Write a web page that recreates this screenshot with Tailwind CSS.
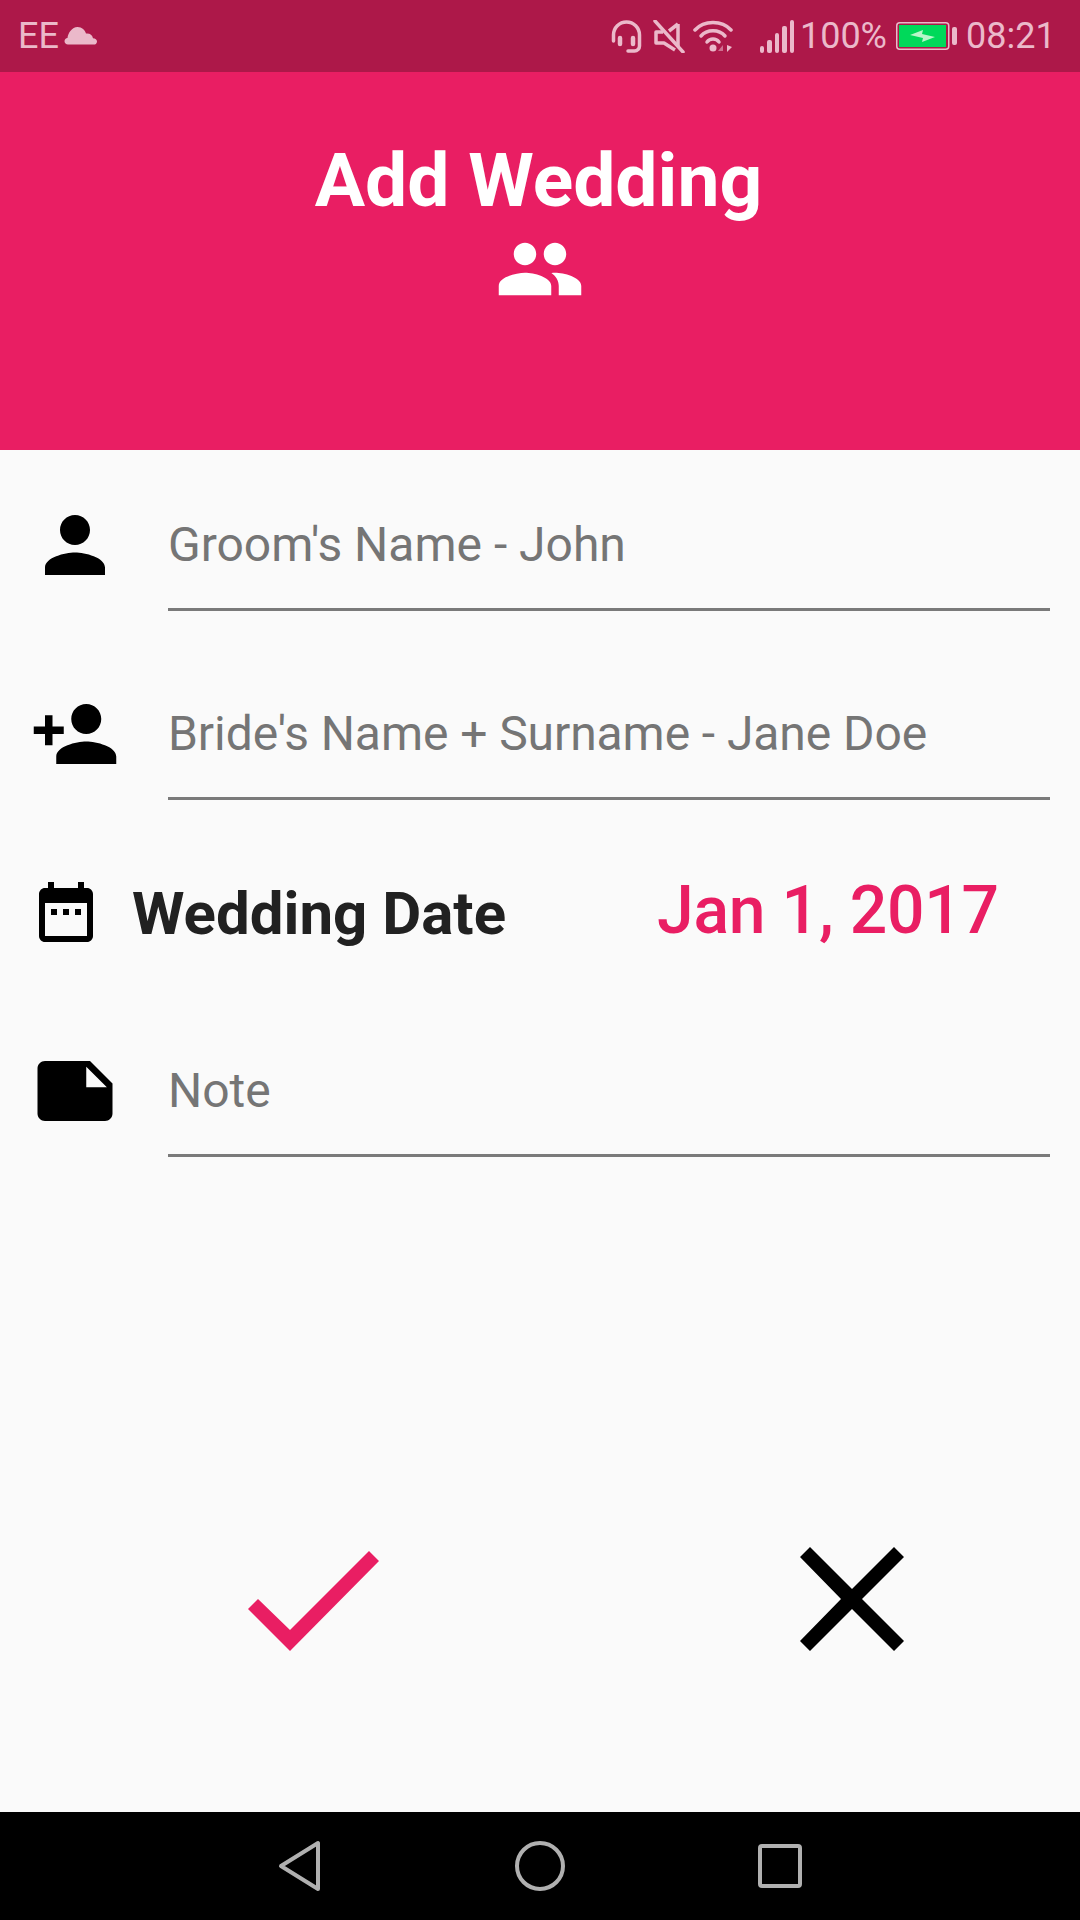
<!DOCTYPE html>
<html lang="en">
<head>
    <meta charset="UTF-8">
    <meta name="viewport" content="width=device-width, initial-scale=1.0">
    <title>Add Wedding</title>
    <script src="https://cdn.jsdelivr.net/npm/@tailwindcss/browser@4"></script>
</head>
<body class="bg-[#fafafa]">
    <div class="w-[1080px] h-[1920px] flex flex-col overflow-hidden font-['Roboto',sans-serif]">

        <!-- Status bar -->
        <div class="h-[72px] bg-[#ad1849] flex items-center text-[36px] leading-none text-[#ebb9ca] shrink-0">
            <span class="ml-[18px]">EE</span>
            <svg class="ml-[5px] -mt-[1px]" width="34" height="20" viewBox="0 0 34 20" fill="#ebb9ca"><path d="M4 18.500c-2 0-3.500-1.500-3.500-3.300s1.300-3 3-3.200C4 7 8 1 13.500 1c4.500 0 7.500 3 8.500 6.500 3.500-.5 6.500 1.500 7 4.700 2.300 0 4 1.300 4 3.200s-1.500 3.100-3 3.100H4z"/></svg>

            <svg class="ml-[513px]" width="31" height="33" viewBox="0 0 31 33" fill="none" stroke="#ebb9ca" stroke-width="3.500" stroke-linecap="round">
                <path d="M2.500 21V15a13 13 0 0 1 26 0V26a5 5 0 0 1-5 5H17"/>
                <path d="M9 18v6M22 18v6" stroke-width="4.500"/>
            </svg>
            <svg class="ml-[10px]" width="33" height="33" viewBox="0 0 33 33" fill="none" stroke="#ebb9ca" stroke-width="3.500" stroke-linejoin="round">
                <path d="M26 4V26M26 4L17 11M11 12H4V23H12L23 30"/>
                <path d="M3 1L31 32" stroke-linecap="round"/>
            </svg>
            <svg class="ml-[8px]" width="40" height="33" viewBox="0 0 40 33" fill="none" stroke="#ebb9ca" stroke-width="3.500" stroke-linecap="round">
                <path d="M2 10C11 0 29 0 38 10"/>
                <path d="M8 16C14 9 26 9 32 16"/>
                <path d="M14 22C17 18 23 18 26 22"/>
                <circle cx="20" cy="28" r="3.500" fill="#ebb9ca" stroke="none"/>
                <path d="M30 31V25L25 31z" fill="#cf6f90" stroke="none"/>
                <path d="M34 25V32L39 27z" fill="#ebb9ca" stroke="none"/>
            </svg>
            <svg class="ml-[27px]" width="34" height="33" viewBox="0 0 34 33" fill="#ebb9ca">
                <rect x="0" y="26" width="4" height="7" rx="2"/>
                <rect x="7" y="20" width="5" height="13" rx="2"/>
                <rect x="15" y="13" width="4" height="20" rx="2"/>
                <rect x="22" y="6" width="5" height="27" rx="2"/>
                <rect x="30" y="0" width="4" height="33" rx="2"/>
            </svg>
            <span class="ml-[6px]">100%</span>
            <svg class="ml-[9px]" width="61" height="28" viewBox="0 0 61 28">
                <rect x="0.750" y="0.750" width="52" height="26.500" rx="3" fill="none" stroke="#ebb9ca" stroke-width="1.500"/>
                <rect x="3" y="3" width="47" height="22" fill="#00d95a"/>
                <path d="M14 13L27 8L26 12L39 15L26 20L27 16z" fill="#b9f6ca"/>
                <rect x="56" y="5" width="5" height="18" rx="2" fill="#ebb9ca"/>
            </svg>
            <span class="ml-[9px]">08:21</span>
        </div>

        <!-- Header -->
        <div class="h-[378px] bg-[#e91e63] flex flex-col items-center shrink-0">
            <h1 class="mt-[71px] -ml-[3px] text-[75px] leading-[75px] font-bold text-white">Add Wedding</h1>
            <svg class="mt-[6px]" width="90" height="90" viewBox="0 0 24 24" fill="#ffffff"><path d="M16 11c1.660 0 2.990-1.340 2.990-3S17.660 5 16 5c-1.660 0-3 1.340-3 3s1.340 3 3 3zm-8 0c1.660 0 2.990-1.340 2.990-3S9.660 5 8 5C6.340 5 5 6.340 5 8s1.340 3 3 3zm0 2c-2.330 0-7 1.170-7 3.500V19h14v-2.500c0-2.330-4.670-3.500-7-3.500zm8 0c-.290 0-.620.020-.970.050 1.160.840 1.970 1.970 1.970 3.450V19h6v-2.500c0-2.330-4.670-3.500-7-3.500z"/></svg>
        </div>

        <!-- Form -->
        <div class="flex-1 flex flex-col">
            <!-- Groom -->
            <div class="mt-[50px] h-[111px] flex px-[30px]">
                <svg class="shrink-0" width="90" height="90" viewBox="0 0 24 24" fill="#000000"><path d="M12 12c2.210 0 4-1.790 4-4s-1.790-4-4-4-4 1.790-4 4 1.790 4 4 4zm0 2c-2.670 0-8 1.340-8 4v2h16v-2c0-2.660-5.330-4-8-4z"/></svg>
                <div class="ml-[48px] flex-1 border-b-[3px] border-[#7a7a7a] text-[48px] leading-[90px] text-[#757575]">Groom's Name - John</div>
            </div>
            <!-- Bride -->
            <div class="mt-[78px] h-[111px] flex px-[30px]">
                <svg class="shrink-0" width="90" height="90" viewBox="0 0 24 24" fill="#000000"><path d="M15 12c2.210 0 4-1.790 4-4s-1.790-4-4-4-4 1.790-4 4 1.790 4 4 4zm-9-2V7H4v3H1v2h3v3h2v-3h3v-2H6zm9 4c-2.670 0-8 1.340-8 4v2h16v-2c0-2.660-5.330-4-8-4z"/></svg>
                <div class="ml-[48px] flex-1 border-b-[3px] border-[#7a7a7a] text-[48px] leading-[90px] tracking-[-0.07px] text-[#757575]">Bride's Name + Surname - Jane Doe</div>
            </div>
            <!-- Wedding date -->
            <div class="mt-[76px] h-[72px] flex items-center px-[30px]">
                <svg class="shrink-0" width="72" height="72" viewBox="0 0 24 24" fill="#000000"><path d="M19 4h-1V2h-2v2H8V2H6v2H5c-1.100 0-2 .9-2 2v14c0 1.100.9 2 2 2h14c1.100 0 2-.9 2-2V6c0-1.100-.9-2-2-2zm0 16H5V9h14v11zM7 11h2v2H7zm4 0h2v2h-2zm4 0h2v2h-2z"/></svg>
                <span class="ml-[30px] mt-[3px] w-[525px] text-[60px] leading-none font-bold text-[#212121]">Wedding Date</span>
                <span class="-mt-[3px] text-[66px] leading-none font-medium tracking-[-0.2px] text-[#e91e63]">Jan 1, 2017</span>
            </div>
            <!-- Note -->
            <div class="mt-[98px] h-[111px] flex px-[30px]">
                <svg class="shrink-0" width="90" height="90" viewBox="0 0 24 24" fill="#000000"><path d="M22 10l-6-6H4c-1.100 0-2 .9-2 2v12.010c0 1.100.9 1.990 2 1.990l16-.010c1.100 0 2-.89 2-1.990v-8zm-7-4.500l5.500 5.500H15V5.500z"/></svg>
                <div class="ml-[48px] flex-1 border-b-[3px] border-[#7a7a7a] text-[48px] leading-[90px] text-[#757575]">Note</div>
            </div>

            <!-- Actions -->
            <div class="mt-[390px] flex items-start pl-[248px]">
                <svg class="mt-[4px]" width="131" height="100" viewBox="248 1551 131 100" fill="#e91e63"><path d="M248 1609L258 1599L290 1630L369 1551L379 1561L290 1651z"/></svg>
                <svg class="ml-[421px]" width="104" height="104" viewBox="800 1547 104 104" fill="#000000"><path d="M810 1547L852 1589L894 1547L904 1557L862 1599L904 1641L894 1651L852 1609L810 1651L800 1641L841 1599L800 1557z"/></svg>
            </div>
        </div>

        <!-- Navigation bar -->
        <div class="h-[108px] bg-black flex items-center shrink-0">
            <svg class="ml-[278px]" width="44" height="52" viewBox="0 0 44 52" fill="none" stroke="#b0b0b0" stroke-width="4" stroke-linejoin="round"><path d="M3 26L40 3V49z"/></svg>
            <svg class="ml-[192px]" width="52" height="52" viewBox="0 0 52 52" fill="none" stroke="#b0b0b0" stroke-width="4"><circle cx="26" cy="26" r="23"/></svg>
            <svg class="ml-[192px]" width="46" height="46" viewBox="0 0 46 46" fill="none" stroke="#b0b0b0" stroke-width="4"><rect x="2" y="3" width="40" height="40" rx="2"/></svg>
        </div>
    </div>
</body>
</html>
